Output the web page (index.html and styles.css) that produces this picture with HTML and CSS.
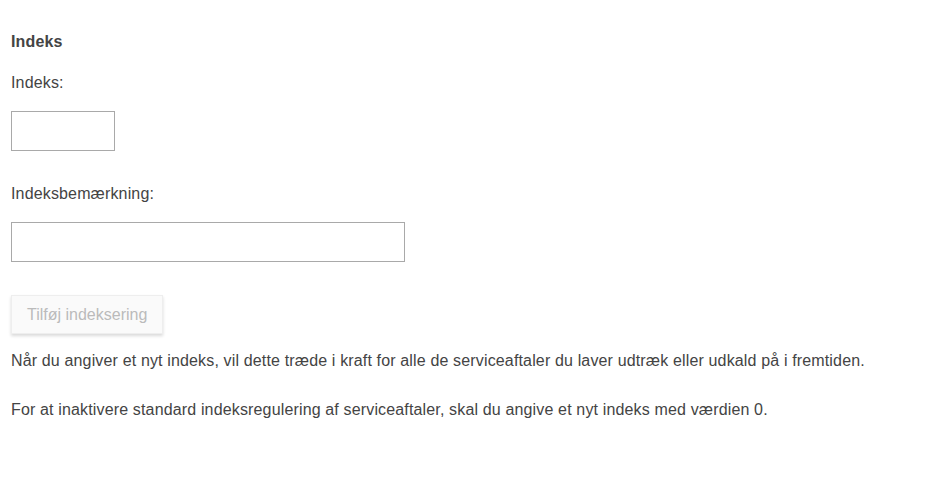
FILE: index.html
```html
<!doctype html>
<html lang="da">
  <head>
    <meta charset="UTF-8" />
    <title>Indeks</title>
    <link rel="stylesheet" href="styles.css">
  </head>
  <body>
    <div class="index-form">
      <h4 class="section-title">Indeks</h4>
      <label class="field">
        <span>Indeks:</span>
        <input type="text" class="input-short" />
      </label>
      <label class="field">
        <span>Indeksbemærkning:</span>
        <input type="text" class="input-long" />
      </label>
      <button class="add-button" disabled>Tilføj indeksering</button>
      <p>Når du angiver et nyt indeks, vil dette træde i kraft for alle de serviceaftaler du laver udtræk eller udkald på i fremtiden.</p>
      <p>For at inaktivere standard indeksregulering af serviceaftaler, skal du angive et nyt indeks med værdien 0.</p>
    </div>
  </body>
</html>
```

FILE: styles.css
```css
body {
  margin: 0;
  padding: 33px 11px;
  font-family: "Liberation Sans", Arial, sans-serif;
  font-size: 16px;
  line-height: 18px;
  letter-spacing: 0.15px;
  color: #444;
  background: #fff;
}

.section-title {
  margin: 0 0 23px;
  font-size: 16px;
  font-weight: bold;
}

.field {
  display: flex;
  flex-direction: column;
  align-items: flex-start;
  gap: 19px;
  margin-bottom: 34px;
}

.field input {
  box-sizing: border-box;
  height: 40px;
  border: 1px solid #a9a9a9;
  padding: 0 6px;
  font: inherit;
}

.input-short {
  width: 104px;
}

.input-long {
  width: 394px;
}

.add-button {
  display: block;
  margin: -1px 0 18px;
  height: 39px;
  padding: 0 15px;
  font: inherit;
  color: #bbb;
  background: #fafafa;
  border: 1px solid #eee;
  box-shadow: 0 2px 3px rgba(0, 0, 0, 0.15);
}

p {
  margin: 0 0 31px;
}
```
